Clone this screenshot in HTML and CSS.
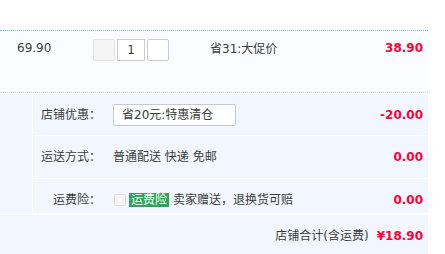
FILE: index.html
```html
<!DOCTYPE html>
<html lang="zh-CN">
<head>
    <meta charset="UTF-8">
    <meta name="viewport" content="width=device-width, initial-scale=1.0">
    <title>购物车</title>
    <link rel="stylesheet" href="styles.css">
</head>
<body>
    <div class="order">
        <div class="item-row">
            <div class="col-price">69.90</div>
            <div class="col-qty">
                <span class="qty-btn minus"></span>
                <span class="qty-input">1</span>
                <span class="qty-btn plus"></span>
            </div>
            <div class="col-promo">省31:大促价</div>
            <div class="col-sum">38.90</div>
        </div>

        <div class="shop-footer">
            <div class="side"></div>
            <div class="rows">
                <div class="row row-coupon">
                    <div class="label">店铺优惠：</div>
                    <div class="value">
                        <div class="select">省20元:特惠清仓</div>
                    </div>
                    <div class="amount">-20.00</div>
                </div>
                <div class="row row-delivery">
                    <div class="label">运送方式：</div>
                    <div class="value">普通配送 快递 免邮</div>
                    <div class="amount">0.00</div>
                </div>
                <div class="row row-insure">
                    <div class="label">运费险：</div>
                    <div class="value">
                        <span class="checkbox"></span>
                        <span class="tag">运费险</span>
                        <span class="insure-text">卖家赠送，退换货可赔</span>
                    </div>
                    <div class="amount">0.00</div>
                </div>
            </div>
        </div>

        <div class="total-row">
            <span class="total-label">店铺合计(含运费)</span>
            <span class="total-price">¥18.90</span>
        </div>
    </div>
</body>
</html>
```

FILE: styles.css
```css
body {
    margin: 0;
    background: #fff;
    font-family: 'DejaVu Sans', 'Noto Sans CJK SC', sans-serif;
    font-size: 12px;
    color: #3c3c3c;
}
.order {
    width: 428px;
    padding-top: 30px;
}
.item-row {
    display: flex;
    height: 61px;
    background: #fbfcff;
    border-top: 1px dotted #80b2ff;
    border-bottom: 1px dotted #d5d5d5;
    margin-bottom: 1px;
}
.col-price {
    width: 76px;
    padding-left: 17px;
    padding-top: 10px;
    line-height: 14px;
}
.col-qty {
    display: flex;
    gap: 2px;
    width: 117px;
    padding-top: 8px;
    height: 22px;
}
.qty-btn {
    width: 20px;
    height: 20px;
    border: 1px solid #ccc;
    border-radius: 2px;
    background: #fff;
}
.qty-btn.minus {
    background: #f5f5f5;
    border-color: #e3e3e3;
}
.qty-input {
    width: 26px;
    height: 20px;
    border: 1px solid #ccc;
    line-height: 20px;
    text-align: center;
    background: #fff;
}
.col-promo {
    flex: 1;
    padding-top: 11px;
    line-height: 14px;
}
.col-sum {
    padding-right: 5px;
    padding-top: 10px;
    line-height: 14px;
    font-weight: bold;
    color: #ff0036;
}
.shop-footer {
    display: flex;
    background: #f2f7ff;
}
.side {
    width: 32px;
    border-right: 1px solid #fff;
}
.rows {
    flex: 1;
}
.row {
    display: flex;
    align-items: center;
    border-bottom: 1px solid #fff;
    line-height: 14px;
}
.row-coupon {
    height: 40px;
    padding-top: 1px;
}
.row-delivery {
    height: 42px;
}
.row-insure {
    height: 35px;
    padding-top: 7px;
    box-sizing: border-box;
}
.label {
    width: 60px;
    margin-left: 8px;
    margin-right: 12px;
    text-align: right;
    white-space: nowrap;
}
.value {
    flex: 1;
    display: flex;
    align-items: center;
}
.amount {
    padding-right: 5px;
    font-weight: bold;
    color: #ff0036;
}
.select {
    width: 113px;
    height: 20px;
    padding-left: 8px;
    border: 1px solid #c9c9c9;
    border-radius: 2px;
    background: #fff;
    line-height: 20px;
}
.checkbox {
    width: 10px;
    height: 10px;
    border: 1px solid #ddd;
    border-radius: 2px;
    background: #f5f5f5;
    margin-left: 1px;
    margin-right: 3px;
}
.tag {
    background: #31a35a;
    color: #fff;
    padding: 0 2px;
    line-height: 14px;
}
.insure-text {
    margin-left: 4px;
}
.total-row {
    display: flex;
    justify-content: flex-end;
    align-items: center;
    gap: 8px;
    height: 40px;
    padding-right: 5px;
    padding-top: 1px;
    background: #f2f7ff;
    border-top: 1px solid #fff;
    line-height: 14px;
}
.total-price {
    font-weight: bold;
    color: #ff0036;
}
```
